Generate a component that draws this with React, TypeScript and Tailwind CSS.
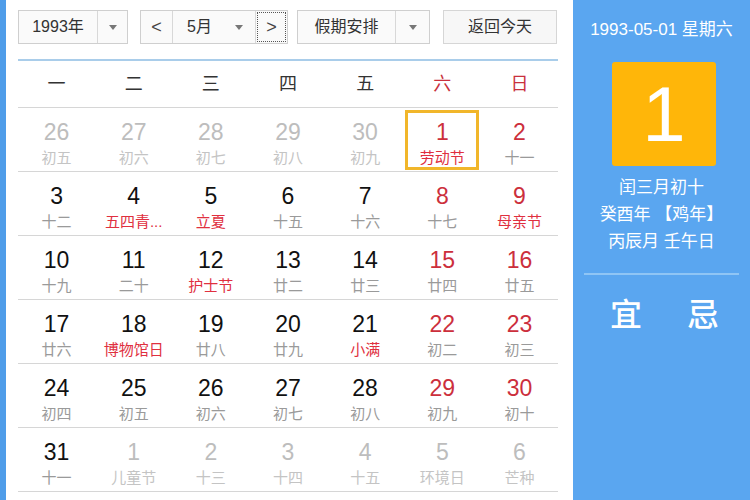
import * as React from 'react';

type Cell = {
  day: number;
  sub: string;
  other?: boolean;
  redNum?: boolean;
  redSub?: boolean;
  selected?: boolean;
};

const WEEK = ['一', '二', '三', '四', '五', '六', '日'];

const ROWS: Cell[][] = [
  [
    { day: 26, sub: '初五', other: true },
    { day: 27, sub: '初六', other: true },
    { day: 28, sub: '初七', other: true },
    { day: 29, sub: '初八', other: true },
    { day: 30, sub: '初九', other: true },
    { day: 1, sub: '劳动节', redNum: true, redSub: true, selected: true },
    { day: 2, sub: '十一', redNum: true },
  ],
  [
    { day: 3, sub: '十二' },
    { day: 4, sub: '五四青...', redSub: true },
    { day: 5, sub: '立夏', redSub: true },
    { day: 6, sub: '十五' },
    { day: 7, sub: '十六' },
    { day: 8, sub: '十七', redNum: true },
    { day: 9, sub: '母亲节', redNum: true, redSub: true },
  ],
  [
    { day: 10, sub: '十九' },
    { day: 11, sub: '二十' },
    { day: 12, sub: '护士节', redSub: true },
    { day: 13, sub: '廿二' },
    { day: 14, sub: '廿三' },
    { day: 15, sub: '廿四', redNum: true },
    { day: 16, sub: '廿五', redNum: true },
  ],
  [
    { day: 17, sub: '廿六' },
    { day: 18, sub: '博物馆日', redSub: true },
    { day: 19, sub: '廿八' },
    { day: 20, sub: '廿九' },
    { day: 21, sub: '小满', redSub: true },
    { day: 22, sub: '初二', redNum: true },
    { day: 23, sub: '初三', redNum: true },
  ],
  [
    { day: 24, sub: '初四' },
    { day: 25, sub: '初五' },
    { day: 26, sub: '初六' },
    { day: 27, sub: '初七' },
    { day: 28, sub: '初八' },
    { day: 29, sub: '初九', redNum: true },
    { day: 30, sub: '初十', redNum: true },
  ],
  [
    { day: 31, sub: '十一' },
    { day: 1, sub: '儿童节', other: true },
    { day: 2, sub: '十三', other: true },
    { day: 3, sub: '十四', other: true },
    { day: 4, sub: '十五', other: true },
    { day: 5, sub: '环境日', other: true },
    { day: 6, sub: '芒种', other: true },
  ],
];

function Caret() {
  return (
    <span className="block h-0 w-0 border-x-[4px] border-t-[5px] border-x-transparent border-t-[#777]" />
  );
}

function DayCell({ cell }: { cell: Cell }) {
  const numColor = cell.other
    ? 'text-[#bdbdbd]'
    : cell.redNum
      ? 'text-[#cc2f3c]'
      : 'text-[#111]';
  const subColor = cell.other
    ? 'text-[#c4c4c4]'
    : cell.redSub
      ? 'text-[#e0303f]'
      : 'text-[#9a9a9a]';
  return (
    <div className="relative flex flex-col items-center">
      {cell.selected && (
        <div className="absolute left-[1px] right-[2px] top-[2px] bottom-[1px] border-[3px] border-[#f1b62a]" />
      )}
      <span className={`mt-[11px] text-[23px] leading-[26px] ${numColor}`}>{cell.day}</span>
      <span className={`text-[15px] leading-[26px] whitespace-nowrap ${subColor}`}>{cell.sub}</span>
    </div>
  );
}

export default function App() {
  return (
    <div
      className="flex h-[500px] w-[750px] overflow-hidden bg-white"
      style={{ fontFamily: '"Liberation Sans", "Noto Sans CJK SC", sans-serif' }}
    >
      <div className="w-[6px] bg-[#4f9de9]" />

      <div className="w-[567px] pl-[12px] pr-[15px]">
        {/* toolbar */}
        <div className="flex h-[59px] items-start pt-[10px] text-[16px] text-[#333]">
          <div className="flex h-[34px] w-[110px] border border-[#cfcfcf] bg-[#fafafa]">
            <div className="flex w-[79px] items-center justify-center border-r border-[#d8d8d8]">1993年</div>
            <div className="flex flex-1 items-center justify-center">
              <Caret />
            </div>
          </div>

          <div className="ml-[12px] flex h-[34px] w-[148px] border border-[#cfcfcf] bg-[#fafafa]">
            <div className="flex w-[32px] items-center justify-center border-r border-[#d8d8d8] text-[18px] text-[#444]">
              &lt;
            </div>
            <div className="flex w-[83px] items-center border-r border-[#d8d8d8]">
              <span className="ml-[14px]">5月</span>
              <span className="ml-auto mr-[12px]">
                <Caret />
              </span>
            </div>
            <div className="m-[1px] flex flex-1 items-center justify-center border border-dotted border-[#555] text-[18px] text-[#444]">
              &gt;
            </div>
          </div>

          <div className="ml-[9px] flex h-[34px] w-[133px] border border-[#cfcfcf] bg-[#fafafa]">
            <div className="flex w-[98px] items-center justify-center border-r border-[#d8d8d8]">假期安排</div>
            <div className="flex flex-1 items-center justify-center">
              <Caret />
            </div>
          </div>

          <div className="ml-[13px] flex h-[34px] w-[114px] items-center justify-center border border-[#d6d6d6] bg-[#f7f7f7]">
            返回今天
          </div>
        </div>

        {/* calendar */}
        <div className="border-t-2 border-[#a9cdea]">
          <div className="grid h-[47px] grid-cols-7 items-center border-b border-[#d6d6d6] text-[18px]">
            {WEEK.map((w, i) => (
              <div key={w} className={`text-center ${i >= 5 ? 'text-[#c9313d]' : 'text-[#333]'}`}>
                {w}
              </div>
            ))}
          </div>
          {ROWS.map((row, r) => (
            <div key={r} className="grid h-[64px] grid-cols-7 border-b border-[#d6d6d6]">
              {row.map((c, i) => (
                <DayCell key={i} cell={c} />
              ))}
            </div>
          ))}
        </div>
      </div>

      {/* right panel */}
      <div className="flex flex-1 flex-col items-center bg-[#5aa6f0] text-white">
        <div className="mt-[20px] text-[17px] leading-[20px] whitespace-nowrap">1993-05-01 星期六</div>
        <div className="ml-[5px] mt-[22px] flex h-[104px] w-[104px] items-center justify-center rounded-[3px] bg-[#ffb609] text-[78px] leading-none">
          1
        </div>
        <div className="mt-[8px] flex flex-col items-center text-[17px] leading-[27px] whitespace-nowrap">
          <span>闰三月初十</span>
          <span>癸酉年 【鸡年】</span>
          <span>丙辰月 壬午日</span>
        </div>
        <div className="mt-[18px] h-[2px] w-[155px] bg-[#8fc5f5]" />
        <div className="mt-[20px] flex gap-[45px] self-start pl-[37px] text-[32px] leading-[40px] font-medium">
          <span>宜</span>
          <span>忌</span>
        </div>
      </div>
    </div>
  );
}
